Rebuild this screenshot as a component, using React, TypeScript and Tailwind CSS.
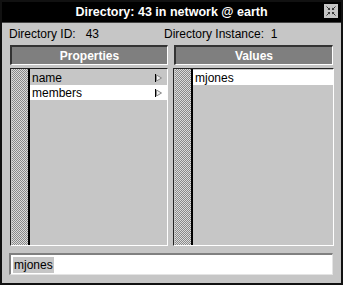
import React from "react";

const font = { fontFamily: '"Liberation Sans", Arial, sans-serif' };

function CloseBox() {
  return (
    <div className="w-[14px] h-[14px] bg-[#c6c6c6] flex items-center justify-center">
      <svg width="14" height="14" viewBox="0 0 14 14">
        <g stroke="#333" strokeWidth="1" fill="none">
          <path d="M2.5 2.5 L5.5 5.5" />
          <path d="M11.5 2.5 L8.5 5.5" />
          <path d="M2.5 11.5 L5.5 8.5" />
          <path d="M11.5 11.5 L8.5 8.5" />
        </g>
        <g fill="#333">
          <path d="M6 6 L3.5 6 L6 3.5 Z" />
          <path d="M8 6 L10.5 6 L8 3.5 Z" />
          <path d="M6 8 L3.5 8 L6 10.5 Z" />
          <path d="M8 8 L10.5 8 L8 10.5 Z" />
        </g>
      </svg>
    </div>
  );
}

function Arrow() {
  return (
    <svg width="8" height="8" viewBox="0 0 8 8" className="shrink-0">
      <path d="M0.5 0 L0.5 8" stroke="#000" strokeWidth="1" />
      <path d="M1.5 1 L6.5 4 L1.5 7 Z" fill="#f0f0f0" stroke="#888" strokeWidth="1" />
    </svg>
  );
}

function Header({ label }: { label: string }) {
  return (
    <div className="h-[20px] bg-[#7f7f7f] border-t-2 border-l-2 border-t-[#333] border-l-[#333] border-b border-r border-b-white border-r-white flex items-center justify-center text-white font-bold text-[12px]">
      {label}
    </div>
  );
}

function ListBox({ children }: { children: React.ReactNode }) {
  return (
    <div className="h-[178px] border-t border-l border-t-[#222] border-l-[#222] border-b border-r border-b-white border-r-white flex">
      <div className="w-[18px] ml-[1px] bg-[conic-gradient(#8a8a8a_0_25%,#dcdcdc_0_50%,#8a8a8a_0_75%,#dcdcdc_0)] bg-[length:2px_2px] border-r-2 border-black" />
      <div className="flex-1 pt-[1px] flex flex-col">{children}</div>
    </div>
  );
}

function Row({ label, selected, arrow }: { label: string; selected?: boolean; arrow?: boolean }) {
  return (
    <div className={"h-[15px] flex items-center pl-[2px] pr-[4px] text-[12px] text-black " + (selected ? "bg-white" : "")}>
      <span className="flex-1 leading-none">{label}</span>
      {arrow && <Arrow />}
    </div>
  );
}

export default function App() {
  return (
    <div style={font} className="w-[343px] h-[285px] bg-[#c6c6c6] border-2 border-[#111] flex flex-col">
      <div className="h-[21px] bg-black border-b border-[#444] relative flex items-center justify-center">
        <span className="text-white font-bold text-[12.5px]">Directory: 43 in network @ earth</span>
        <div className="absolute right-[3px] top-[2px]">
          <CloseBox />
        </div>
      </div>
      <div className="h-[22px] flex items-center text-[12px] text-black pl-[7px]">
        <span className="w-[155px]">Directory ID:&nbsp;&nbsp;&nbsp;43</span>
        <span>Directory Instance:&nbsp;&nbsp;1</span>
      </div>
      <div className="flex gap-[5px] pl-[8px]">
        <div className="w-[158px] flex flex-col gap-[3px]">
          <Header label="Properties" />
          <ListBox>
            <Row label="name" arrow />
            <Row label="members" selected arrow />
          </ListBox>
        </div>
        <div className="w-[161px] flex flex-col gap-[3px]">
          <div className="pl-[1px] pr-[1px]">
            <Header label="Values" />
          </div>
          <ListBox>
            <Row label="mjones" selected />
          </ListBox>
        </div>
      </div>
      <div className="mt-[7px] ml-[7px] w-[324px] h-[22px] bg-white border-t-2 border-l-2 border-t-[#808080] border-l-[#808080] border-b border-r border-b-[#e4e4e4] border-r-[#e4e4e4] flex items-center pl-[2px]">
        <span className="bg-[#c6c6c6] text-[12px] text-black px-[1px] leading-[16px]">mjones</span>
      </div>
    </div>
  );
}
